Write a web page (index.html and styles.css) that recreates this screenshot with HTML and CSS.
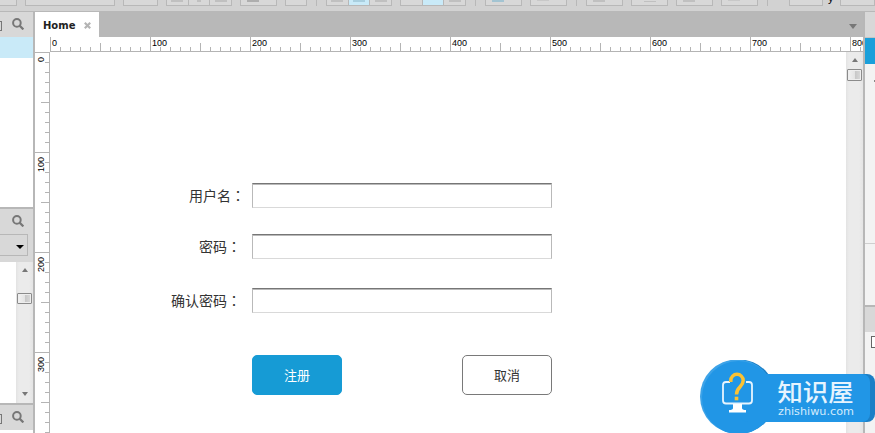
FILE: index.html
```
<!DOCTYPE html>
<html lang="zh-CN">
<head>
    <meta charset="UTF-8">
    <meta name="viewport" content="width=device-width, initial-scale=1.0">
    <title>Home</title>
    <link rel="stylesheet" href="styles.css">
</head>
<body>
<svg width="0" height="0" class="defs">
    <symbol id="search" viewBox="0 0 12 12">
        <circle cx="4.9" cy="4.9" r="3.8" fill="none" stroke="#777" stroke-width="2"/>
        <path d="M7.6 7.6 11.4 11.4" fill="none" stroke="#777" stroke-width="2.2"/>
    </symbol>
</svg>

<div class="toolbar">
    <div class="group first"></div>
    <div class="group wide"></div>
    <div class="group w35"></div>
    <div class="group triple"><i><b></b></i><i><b class="thin"></b></i><i><b></b></i></div>
    <div class="group w37"><b class="dark"></b></div>
    <div class="group w22"></div>
    <div class="sep"></div>
    <div class="group triple"><i><b></b></i><i class="on"><b></b></i><i><b></b></i></div>
    <div class="group triple"><i></i><i class="on"></i><i><b></b></i></div>
    <div class="sep"></div>
    <div class="group w37"><b class="blue"></b></div>
    <div class="group w37"><b class="faint"></b></div>
    <div class="sep"></div>
    <div class="group w37"><b></b></div>
    <div class="group w37"><b class="line"></b></div>
    <div class="group w37"><b></b></div>
    <div class="group w37"><b class="faint"></b></div>
    <div class="sep"></div>
    <div class="group field"></div>
    <span class="axis">y</span>
    <div class="group last"></div>
</div>

<div class="workspace">
    <div class="left">
        <div class="panel pages">
            <div class="panel-head"><span class="square"></span><svg class="icon"><use href="#search"/></svg></div>
            <div class="selected"></div>
        </div>
        <div class="panel library">
            <div class="panel-head"><svg class="icon"><use href="#search"/></svg></div>
            <div class="select"><span class="arrow black"></span></div>
            <div class="list">
                <div class="scrollbar">
                    <span class="arrow up"></span>
                    <span class="thumb"></span>
                    <span class="arrow down"></span>
                </div>
            </div>
        </div>
        <div class="panel masters">
            <div class="panel-head"><span class="square"></span><svg class="icon"><use href="#search"/></svg></div>
        </div>
    </div>

    <div class="center">
        <div class="tabs">
            <div class="tab"><span>Home</span>
                <svg class="close" viewBox="0 0 7 7"><path d="M.8.8 6.2 6.2M6.2.8.8 6.2" stroke="#b4b4b4" stroke-width="2.2"/></svg>
            </div>
            <span class="arrow tab-arrow"></span>
        </div>
        <div class="ruler-x">
            <span>0</span><span>100</span><span>200</span><span>300</span><span>400</span><span>500</span><span>600</span><span>700</span><span>800</span>
        </div>
        <div class="editor">
            <div class="ruler-y">
                <span>0</span><span>100</span><span>200</span><span>300</span>
            </div>
            <div class="canvas">
                <form>
                    <div class="row">
                        <label class="user" for="user">用户名<em lang="zh-TW">：</em></label>
                        <input type="text" id="user">
                    </div>
                    <div class="row">
                        <label for="pwd">密码<em lang="zh-TW">：</em></label>
                        <input type="text" id="pwd">
                    </div>
                    <div class="row">
                        <label for="pwd2">确认密码<em lang="zh-TW">：</em></label>
                        <input type="text" id="pwd2">
                    </div>
                    <div class="buttons">
                        <button type="button" class="primary">注册</button>
                        <button type="button">取消</button>
                    </div>
                </form>
            </div>
            <div class="scrollbar main-scroll">
                <span class="arrow up"></span>
                <span class="thumb"></span>
            </div>
        </div>
    </div>

    <div class="right">
        <div class="right-head"></div>
        <div class="right-active"></div>
        <div class="right-body"><span class="dash"></span></div>
        <div class="right-body2"></div>
        <div class="right-head2"></div>
        <div class="right-end"><span class="box"></span></div>
    </div>
</div>

<!-- logo -->
<svg class="watermark" width="175" height="73" viewBox="0 0 175 73">
    <rect x="30" y="14" width="145" height="48" rx="8" fill="#1b7fc6"/>
    <circle cx="39" cy="36.5" r="37" fill="#1b7fc6"/>
    <circle cx="37" cy="36.5" r="37" fill="#3da3e8"/>
    <circle cx="38.5" cy="37.5" r="36.5" fill="#2196e6"/>
    <path d="M68 15Q73 22 75 31V62H68Z" fill="#2196e6"/>
    <rect x="40" y="14" width="130" height="48" rx="8" fill="#2196e6"/>
    <path d="M30 22H26a3 3 0 0 0-3 3V40.500a3 3 0 0 0 3 3H49a3 3 0 0 0 3-3V25a3 3 0 0 0-3-3H46" fill="none" stroke="#e6f4fe" stroke-width="1.8"/>
    <path d="M33 44H42V48Q42 50 46 50V52.500H29V50Q33 50 33 48Z" fill="#fff"/>
    <path d="M30.800 22V20.500a6.200 6.200 0 0 1 12.400 0C43.200 27 36.500 26.500 36.500 34.500" fill="none" stroke="#fcc233" stroke-width="3.500"/>
    <rect x="34.700" y="36.700" width="3.600" height="3.600" fill="#fcc233"/>
    <text x="77.500" y="40.500" class="wm-cn" textLength="76" lengthAdjust="spacingAndGlyphs">知识屋</text>
    <text x="78" y="55" class="wm-en" textLength="76" lengthAdjust="spacingAndGlyphs">zhishiwu.com</text>
</svg>
</body>
</html>
```
FILE: styles.css
```
* {
    box-sizing: border-box;
}

body {
    margin: 0;
    width: 875px;
    height: 433px;
    overflow: hidden;
    font-family: "Liberation Sans", "Noto Sans CJK SC", sans-serif;
    background-color: #fff;
}

.defs {
    position: absolute;
}

/* Toolbar */
.toolbar {
    display: flex;
    gap: 8px;
    height: 12px;
    background-color: #d2d2d2;
    border-bottom: 1px solid #b8b8b8;
}

.group {
    display: flex;
    justify-content: center;
    flex-shrink: 0;
    height: 6px;
    background-color: #d8d8d8;
    border: 1px solid #b8b8b8;
    border-top: none;
}

.first { width: 17px; border-left: none; }
.wide { width: 90px; }
.w35 { width: 35px; }
.w37 { width: 37px; }
.w22 { width: 22px; }
.triple { width: 66px; }
.field { width: 34px; margin-left: 12px; }
.last { width: 35px; margin-left: 1px; }

.group i {
    display: flex;
    justify-content: center;
    flex: 1;
}

.group i + i {
    border-left: 1px solid #b8b8b8;
}

.group .on {
    background-color: #c9eaf8;
}

.group b {
    width: 12px;
    height: 2px;
    background-color: #c0c0c0;
}

.group > b { margin-right: 12px; }
.group .on b { background-color: #a9cfdf; }
.group .thin { width: 4px; }
.group .dark { background-color: #aeaeae; }
.group .blue { background-color: #a3c4d2; }
.group .faint { height: 1px; background-color: #c8c8c8; }
.group .line { height: 1px; margin: 1px 0 0; }

.sep {
    width: 1px;
    height: 6px;
    margin: 0 1px;
    background-color: #b8b8b8;
}

.axis {
    width: 0;
    font-size: 11px;
    line-height: 12px;
    margin: -8px 0 0 -3px;
    padding-right: 3px;
    height: 12px;
}

/* Workspace */
.workspace {
    display: flex;
    height: 421px;
}

.left {
    width: 35px;
    border-right: 2px solid #b7b7b7;
    flex-shrink: 0;
}

.panel-head {
    display: flex;
    align-items: center;
    justify-content: flex-end;
    height: 25px;
    padding: 0 9px 1px 0;
    background-color: #d8d8d8;
}

.icon {
    width: 12px;
    height: 12px;
}

.square {
    width: 5px;
    height: 10px;
    margin: 3px auto 0 -3px;
    border: 1px solid #777;
}

.selected {
    height: 21px;
    background-color: #c9eaf8;
}

.pages {
    height: 195px;
}

.library {
    height: 196px;
    border-top: 2px solid #b7b7b7;
    background-color: #d8d8d8;
}

.select {
    display: flex;
    align-items: center;
    justify-content: flex-end;
    width: 28px;
    height: 22px;
    padding: 3px 3px 0 0;
    border: 1px solid #b7b7b7;
    border-left: none;
}

.list {
    display: flex;
    justify-content: flex-end;
    height: 141px;
    margin-top: 6px;
    background-color: #fff;
}

.masters {
    border-top: 2px solid #b7b7b7;
}

.arrow {
    width: 0;
    height: 0;
    border: 3px solid transparent;
    border-top: 4px solid #777;
    border-bottom: none;
}

.arrow.black {
    border-width: 4px 4px 0;
    border-top-color: #000;
}

.arrow.up {
    border-top: none;
    border-bottom: 4px solid #777;
}

.scrollbar {
    display: flex;
    flex-direction: column;
    align-items: center;
    width: 17px;
    padding: 6px 0 7px;
    background: linear-gradient(90deg, #e3e3e3, #ebebeb 3px, #ebebeb 13px, #e4e4e4);
}

.thumb {
    width: 15px;
    height: 11px;
    margin-top: 21px;
    border: 1px solid #8b8b8b;
    border-radius: 1px;
    background: linear-gradient(90deg, #f2f2f2, #e4e4e4 50%, #c6c6c6 52%, #dadada);
    box-shadow: inset 0 0 0 1px #eee;
}

.scrollbar .down {
    margin-top: auto;
}

/* Center */
.center {
    display: flex;
    flex-direction: column;
    width: 828px;
    flex-shrink: 0;
}

.tabs {
    display: flex;
    justify-content: space-between;
    align-items: center;
    height: 25px;
    background-color: #b8b8b8;
}

.tab {
    display: flex;
    align-items: center;
    width: 64px;
    height: 25px;
    padding: 1px 0 0 8px;
    background-color: #fff;
    color: #222;
    font: bold 10px "DejaVu Sans", sans-serif;
}

.tab span {
    width: 33px;
}

.close {
    width: 7px;
    height: 7px;
    margin-left: 8px;
}

.tab-arrow {
    margin: 4px 6px 0 0;
    border-width: 5px 4px 0;
}

.ruler-x {
    display: flex;
    height: 15px;
    margin-left: 15px;
    overflow: hidden;
    font-size: 9px;
    line-height: 12px;
    background:
        linear-gradient(#b4b4b4, #b4b4b4) 0 100% / 100% 1px no-repeat,
        linear-gradient(90deg, #b4b4b4 1px, transparent 1px) 0 100% / 100px 15px repeat-x,
        linear-gradient(90deg, #b4b4b4 1px, transparent 1px) 0 100% / 50px 9px repeat-x,
        linear-gradient(90deg, #b4b4b4 1px, transparent 1px) 0 100% / 10px 5px repeat-x;
}

.ruler-x span {
    width: 100px;
    padding-left: 2px;
    flex-shrink: 0;
}

.editor {
    display: flex;
    flex: 1;
    overflow: hidden;
}

.ruler-y {
    width: 15px;
    overflow: hidden;
    font-size: 9px;
    line-height: 12px;
    background:
        linear-gradient(#b4b4b4, #b4b4b4) 100% 0 / 1px 100% no-repeat,
        linear-gradient(#b4b4b4 1px, transparent 1px) 100% 0 / 15px 100px repeat-y,
        linear-gradient(#b4b4b4 1px, transparent 1px) 100% 0 / 9px 50px repeat-y,
        linear-gradient(#b4b4b4 1px, transparent 1px) 100% 0 / 5px 10px repeat-y;
}

.ruler-y span {
    display: block;
    width: 12px;
    height: 100px;
    padding-bottom: 5px;
    writing-mode: vertical-rl;
    transform: rotate(180deg);
    text-align: right;
}

.canvas {
    flex: 1;
    padding: 131px 0 0 110px;
}

.main-scroll .thumb {
    height: 12px;
    margin-top: 7px;
}

/* Form */
.row {
    display: flex;
    align-items: center;
    height: 25px;
    margin-bottom: 26px;
}

.row + .row + .row {
    margin: 29px 0 42px;
}

.row label {
    width: 81px;
    margin-right: 11px;
    padding-bottom: 2px;
    text-align: right;
    white-space: nowrap;
    color: #333;
    font: 14px/20px "Noto Sans CJK SC", sans-serif;
}

.row .user {
    width: 85px;
    margin-right: 7px;
}

.row em {
    font-family: "Noto Sans CJK TC", sans-serif;
    font-style: normal;
}

.row input {
    width: 300px;
    height: 25px;
    padding: 0 4px;
    border: 1px solid #b9b9b9;
    border-top-color: #767676;
    border-bottom-color: #d9d9d9;
    box-shadow: inset 0 1px #b9b9b9;
    outline: none;
}

.buttons {
    display: flex;
    gap: 120px;
    padding-left: 92px;
}

button {
    width: 90px;
    height: 40px;
    padding: 0 0 2px;
    border: 1px solid #797979;
    border-radius: 5px;
    background-color: #fff;
    color: #333;
    font: 13px "Noto Sans CJK SC", sans-serif;
}

.primary {
    border-color: #169bd5;
    background-color: #169bd5;
    color: #fff;
}

/* Right */
.right {
    display: flex;
    flex-direction: column;
    width: 12px;
    flex-shrink: 0;
    border-left: 2px solid #b7b7b7;
    background-color: #f3f3f3;
}

.right-head {
    height: 26px;
    background-color: #d8d8d8;
    border-bottom: 1px solid #c4c4c4;
}

.right-active {
    height: 26px;
    background-color: #1a9fda;
}

.right-body {
    display: flex;
    justify-content: flex-end;
    height: 180px;
    padding-top: 16px;
    border-bottom: 1px solid #cfcfcf;
}

.dash {
    width: 1px;
    height: 2px;
    background-color: #888;
}

.right-body2 {
    height: 61px;
}

.right-head2 {
    height: 27px;
    border-top: 2px solid #b7b7b7;
    background-color: #d8d8d8;
}

.right-end {
    padding: 4px 0 0 6px;
}

.box {
    display: block;
    width: 12px;
    height: 12px;
    border: 1px solid #666;
    background-color: #fff;
}

/* Logo over the bottom right corner */
.watermark {
    position: absolute;
    left: 700px;
    top: 360px;
}

.wm-cn {
    font: 500 24px "Noto Sans CJK SC", sans-serif;
    fill: #e6f4fe;
}

.wm-en {
    font: 11px "DejaVu Sans", sans-serif;
    fill: #d3ebfc;
}
```
